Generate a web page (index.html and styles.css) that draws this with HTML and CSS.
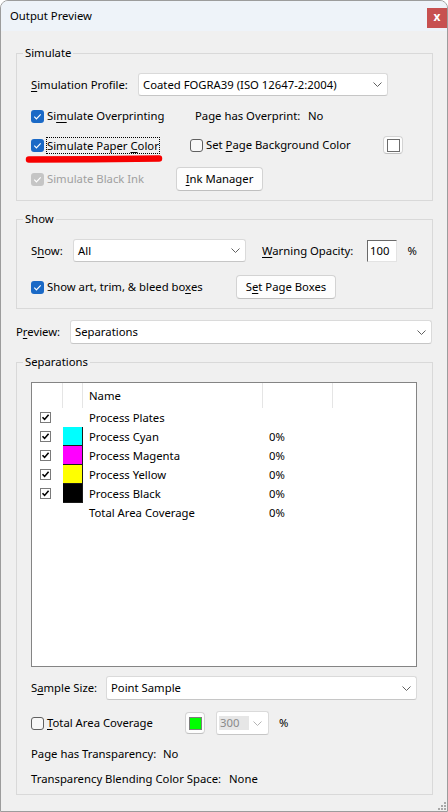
FILE: index.html
```html
<!DOCTYPE html>
<html lang="en">
<head>
<meta charset="UTF-8" />
<meta name="viewport" content="width=device-width, initial-scale=1" />
<title>Output Preview</title>
<link rel="stylesheet" href="styles.css">
</head>
<body>
<div class="window">
  <div class="titlebar">
    <span class="title">Output Preview</span>
    <button class="close">x</button>
  </div>

  <div class="body">
    <fieldset class="group group-simulate">
      <legend>Simulate</legend>

      <div class="row row-profile">
        <span class="lbl w-profile"><u>S</u>imulation Profile:</span>
        <div class="combo combo-profile">
          <span>Coated FOGRA39 (ISO 12647-2:2004)</span>
          <svg class="chev" width="9" height="5" viewBox="0 0 9 5"><path d="M0.5 0.5 L4.5 4.5 L8.5 0.5" /></svg>
        </div>
      </div>

      <div class="row row-overprint">
        <span class="chk w-overprint">
          <span class="box on"><svg width="13" height="13" viewBox="0 0 13 13"><path d="M3.3 6.7 L5.4 8.8 L9.7 4.3" /></svg></span>
          <span>Si<u>m</u>ulate Overprinting</span>
        </span>
        <span class="lbl w-has-op">Page has Overprint:</span>
        <span>No</span>
      </div>

      <div class="row row-paper">
        <span class="chk w-paper">
          <span class="box on"><svg width="13" height="13" viewBox="0 0 13 13"><path d="M3.3 6.7 L5.4 8.8 L9.7 4.3" /></svg></span>
          <span class="focus">Simulate Paper <u>C</u>olor</span>
        </span>
        <span class="chk w-pagebg">
          <span class="box off"></span>
          <span>Set <u>P</u>age Background Color</span>
        </span>
        <button class="btn swatch-btn"><span class="swatch swatch-white"></span></button>
        <!-- hand drawn mark from the screenshot -->
        <svg class="marker" width="140" height="10" viewBox="0 0 140 10"><path d="M4 5.6 C 40 5.4, 100 5.2, 134 4.6" /></svg>
      </div>

      <div class="row row-blackink">
        <span class="chk w-blackink disabled">
          <span class="box dis"><svg width="13" height="13" viewBox="0 0 13 13"><path d="M3.3 6.7 L5.4 8.8 L9.7 4.3" /></svg></span>
          <span>Simulate Black Ink</span>
        </span>
        <button class="btn btn-ink"><u>I</u>nk Manager</button>
      </div>
    </fieldset>

    <fieldset class="group group-show">
      <legend>Show</legend>

      <div class="row row-show">
        <span class="lbl w-show">S<u>h</u>ow:</span>
        <div class="combo combo-show">
          <span>All</span>
          <svg class="chev" width="9" height="5" viewBox="0 0 9 5"><path d="M0.5 0.5 L4.5 4.5 L8.5 0.5" /></svg>
        </div>
        <span class="lbl w-warn"><u>W</u>arning Opacity:</span>
        <div class="edit">100</div>
        <span class="pct">%</span>
      </div>

      <div class="row row-boxes">
        <span class="chk w-boxes">
          <span class="box on"><svg width="13" height="13" viewBox="0 0 13 13"><path d="M3.3 6.7 L5.4 8.8 L9.7 4.3" /></svg></span>
          <span>Show art, trim, &amp; bleed bo<u>x</u>es</span>
        </span>
        <button class="btn btn-boxes">S<u>e</u>t Page Boxes</button>
      </div>
    </fieldset>

    <div class="row row-preview">
      <span class="lbl w-preview">P<u>r</u>eview:</span>
      <div class="combo combo-preview">
        <span>Separations</span>
        <svg class="chev" width="9" height="5" viewBox="0 0 9 5"><path d="M0.5 0.5 L4.5 4.5 L8.5 0.5" /></svg>
      </div>
    </div>

    <fieldset class="group group-seps">
      <legend>Separations</legend>

      <div class="list">
        <div class="list-head">
          <span class="c1"></span>
          <span class="c2"></span>
          <span class="c3">Name</span>
          <span class="c4"></span>
          <span class="c5"></span>
        </div>
        <div class="list-row">
          <span class="c1"><span class="tick"><svg width="9" height="9" viewBox="0 0 9 9"><path d="M1.5 4.2 L3.6 6.4 L7.6 1.8" /></svg></span></span>
          <span class="c2"></span>
          <span class="c3">Process Plates</span>
          <span class="c4"></span>
        </div>
        <div class="list-row">
          <span class="c1"><span class="tick"><svg width="9" height="9" viewBox="0 0 9 9"><path d="M1.5 4.2 L3.6 6.4 L7.6 1.8" /></svg></span></span>
          <span class="c2 ink ink-cyan"></span>
          <span class="c3">Process Cyan</span>
          <span class="c4">0%</span>
        </div>
        <div class="list-row">
          <span class="c1"><span class="tick"><svg width="9" height="9" viewBox="0 0 9 9"><path d="M1.5 4.2 L3.6 6.4 L7.6 1.8" /></svg></span></span>
          <span class="c2 ink ink-magenta"></span>
          <span class="c3">Process Magenta</span>
          <span class="c4">0%</span>
        </div>
        <div class="list-row">
          <span class="c1"><span class="tick"><svg width="9" height="9" viewBox="0 0 9 9"><path d="M1.5 4.2 L3.6 6.4 L7.6 1.8" /></svg></span></span>
          <span class="c2 ink ink-yellow"></span>
          <span class="c3">Process Yellow</span>
          <span class="c4">0%</span>
        </div>
        <div class="list-row">
          <span class="c1"><span class="tick"><svg width="9" height="9" viewBox="0 0 9 9"><path d="M1.5 4.2 L3.6 6.4 L7.6 1.8" /></svg></span></span>
          <span class="c2 ink ink-black"></span>
          <span class="c3">Process Black</span>
          <span class="c4">0%</span>
        </div>
        <div class="list-row">
          <span class="c1"></span>
          <span class="c2"></span>
          <span class="c3">Total Area Coverage</span>
          <span class="c4">0%</span>
        </div>
      </div>

      <div class="row row-sample">
        <span class="lbl w-sample">S<u>a</u>mple Size:</span>
        <div class="combo combo-sample">
          <span>Point Sample</span>
          <svg class="chev" width="9" height="5" viewBox="0 0 9 5"><path d="M0.5 0.5 L4.5 4.5 L8.5 0.5" /></svg>
        </div>
      </div>

      <div class="row row-tac">
        <span class="chk w-tac">
          <span class="box off"></span>
          <span><u>T</u>otal Area Coverage</span>
        </span>
        <button class="btn green-btn"><span class="swatch swatch-green"></span></button>
        <div class="combo combo-tac">
          <span class="sel">300</span>
          <svg class="chev chev-dis" width="9" height="5" viewBox="0 0 9 5"><path d="M0.5 0.5 L4.5 4.5 L8.5 0.5" /></svg>
        </div>
        <span class="pct-tac">%</span>
      </div>

      <div class="row row-info">
        <span class="lbl w-trans">Page has Transparency:</span>
        <span>No</span>
      </div>
      <div class="row row-info row-info2">
        <span class="lbl w-blend">Transparency Blending Color Space:</span>
        <span>None</span>
      </div>
    </fieldset>
  </div>

  <svg class="grip" width="10" height="10" viewBox="0 0 10 10">
    <rect x="7" y="1" width="2" height="2" />
    <rect x="4" y="4" width="2" height="2" />
    <rect x="7" y="4" width="2" height="2" />
    <rect x="1" y="7" width="2" height="2" />
    <rect x="4" y="7" width="2" height="2" />
    <rect x="7" y="7" width="2" height="2" />
  </svg>
</div>
</body>
</html>
```

FILE: styles.css
```css
* {
  box-sizing: border-box;
}
html, body {
  margin: 0;
  padding: 0;
  background: #ffffff;
}
body {
  font-family: "Noto Sans", "Open Sans", sans-serif;
  font-size: 11.3px;
  line-height: 16px;
  color: #000;
}
u {
  text-decoration-thickness: 1px;
  text-underline-offset: 2px;
}

.window {
  position: relative;
  width: 448px;
  height: 812px;
  background: #f0f0f0;
  border: 1px solid #9c9c9c;
  border-radius: 8px 8px 0 0;
  overflow: hidden;
}
.titlebar {
  height: 30px;
  background: #eef3f9;
  display: flex;
  justify-content: space-between;
  align-items: flex-start;
  padding-left: 9px;
}
.title {
  margin-top: 7px;
}
.close {
  margin-top: 7px;
  width: 20px;
  height: 20px;
  border: 0;
  padding: 0 0 3px;
  background: #c75050;
  color: #fff;
  font: bold 12px "Noto Sans", sans-serif;
  line-height: 16px;
}

.body {
  padding: 14px 14px 0 15px;
}

/* group boxes */
fieldset.group {
  margin: 0;
  min-width: 0;
  border: 1px solid #d9d9d9;
  padding: 12px 15px 9px 14px;
}
legend {
  padding: 0 2px;
  margin-left: -8px;
  line-height: 16px;
}
.group-show {
  margin-top: 10px !important;
}
.group-seps {
  margin-top: 10px !important;
  padding-bottom: 5px !important;
}

.row {
  display: flex;
  align-items: center;
  white-space: nowrap;
}
.lbl, .chk {
  flex: none;
}
.chk {
  display: flex;
  align-items: center;
}
.chk.disabled {
  color: #a0a0a0;
}

.box {
  flex: none;
  width: 13px;
  height: 13px;
  border-radius: 3px;
  margin-right: 3px;
}
.box svg {
  display: block;
}
.box svg path {
  fill: none;
  stroke: #fff;
  stroke-width: 1.2;
}
.box.on {
  background: #1a69c6;
}
.box.off {
  background: #f7f7f7;
  border: 1px solid #606060;
}
.box.dis {
  background: #c5c5c5;
}

.focus {
  border: 1px dotted #000;
  margin-left: -1px;
  padding: 0 0 0 0;
  line-height: 15px;
}

/* simulate group rows */
.row-profile {
  height: 23px;
}
.w-profile { width: 107px; }
.combo-profile { width: 250px; }

.row-overprint {
  height: 20px;
  margin-top: 10px;
}
.w-overprint { width: 164px; }
.w-has-op { width: 113px; }

.row-paper {
  position: relative;
  height: 20px;
  margin-top: 9px;
}
.w-paper { width: 159px; }
.w-pagebg { width: 193px; }

.marker {
  position: absolute;
  left: -6px;
  top: 19px;
}
.marker path {
  fill: none;
  stroke: #f70000;
  stroke-width: 6.5;
  stroke-linecap: round;
}

.row-blackink {
  height: 24px;
  margin-top: 12px;
}
.w-blackink { width: 145px; }

/* buttons */
.btn {
  height: 24px;
  padding: 0;
  background: #fdfdfd;
  border: 1px solid #d3d3d3;
  border-bottom-color: #bfbfbf;
  border-radius: 4px;
  font: inherit;
  color: #000;
}
.btn-ink { width: 87px; }
.btn-boxes { width: 100px; }

.swatch-btn {
  width: 20px;
  height: 18px;
  display: flex;
  align-items: center;
  justify-content: center;
}
.swatch {
  display: block;
  width: 13px;
  height: 13px;
}
.swatch-white {
  background: #fff;
  border: 1.5px solid #6c6c6c;
}
.green-btn {
  width: 20px;
  height: 22px;
  display: flex;
  align-items: center;
  justify-content: center;
  margin-right: 11px;
}
.swatch-green {
  background: #00ff00;
  border: 1px solid #7c7c7c;
}

/* combos */
.combo {
  flex: none;
  height: 24px;
  display: flex;
  align-items: center;
  justify-content: space-between;
  background: #fff;
  border: 1px solid #dadada;
  border-bottom-color: #c6c6c6;
  border-radius: 3px;
  padding: 0 5px 0 4px;
}
.combo-profile { height: 23px; }
.chev path {
  fill: none;
  stroke: #606060;
  stroke-width: 1;
}
.chev-dis path {
  stroke: #b4b4b4;
}

/* show group */
.row-show {
  height: 23px;
}
.w-show { width: 42px; }
.combo-show {
  width: 173px;
  height: 23px;
}
.w-warn {
  width: 105px;
  margin-left: 16px;
}
.edit {
  width: 30px;
  height: 22px;
  background: #fff;
  border: 1px solid #e3e3e3;
  border-top-color: #6a6a6a;
  border-left-color: #6a6a6a;
  padding-left: 2px;
  line-height: 19px;
}
.pct {
  margin-left: 11px;
}
.row-boxes {
  height: 24px;
  margin-top: 13px;
}
.w-boxes { width: 205px; }

/* preview */
.row-preview {
  height: 24px;
  margin-top: 11px;
}
.w-preview { width: 54px; }
.combo-preview { width: 362px; }

/* separations list */
.list {
  width: 386px;
  height: 285px;
  background: #fff;
  border: 1px solid #848484;
}
.list-head, .list-row {
  display: flex;
}
.list-head {
  height: 25px;
  align-items: center;
}
.list-head > span {
  height: 25px;
  line-height: 25px;
}
.list-head .c1,
.list-head .c2,
.list-head .c3,
.list-head .c4 {
  border-right: 1px solid #e5e5e5;
}
.list-row {
  height: 19px;
  line-height: 19px;
}
.c1 {
  width: 31px;
  flex: none;
}
.c2 {
  width: 20px;
  flex: none;
}
.c3 {
  width: 180px;
  flex: none;
  padding-left: 6px;
}
.c4 {
  width: 70px;
  flex: none;
  padding-left: 6px;
}
.c5 {
  flex: 1;
}
.list-row .c1 {
  display: flex;
  align-items: center;
  padding-left: 8px;
}
.tick {
  width: 11px;
  height: 11px;
  border: 1px solid #7a7a7a;
  background: #fff;
}
.tick svg {
  display: block;
}
.tick path {
  fill: none;
  stroke: #000;
  stroke-width: 1.6;
}
.ink {
  border-right: 1px solid #1a1a1a;
  border-bottom: 1px solid #1a1a1a;
}
.ink-cyan { background: #00ffff; }
.ink-magenta { background: #ff00ff; }
.ink-yellow { background: #ffff00; }
.ink-black { background: #000; }

/* bottom controls */
.row-sample {
  height: 24px;
  margin-top: 9px;
}
.w-sample { width: 75px; }
.combo-sample { width: 311px; }

.row-tac {
  height: 24px;
  margin-top: 11px;
}
.w-tac { width: 154px; }
.combo-tac {
  width: 53px;
  padding-left: 2px;
  padding-right: 6px;
}
.sel {
  background: #e6e6e6;
  color: #8a8a8a;
  width: 30px;
  height: 14px;
  line-height: 14px;
  padding-left: 1px;
}
.pct-tac {
  margin-left: 10px;
}

.row-info {
  height: 20px;
  margin-top: 9px;
}
.row-info2 {
  margin-top: 5px;
}
.w-trans { width: 132px; }
.w-blend { width: 198px; }

.grip {
  position: absolute;
  right: 0;
  bottom: 0;
}
.grip rect {
  fill: #a8a8a8;
}
```
